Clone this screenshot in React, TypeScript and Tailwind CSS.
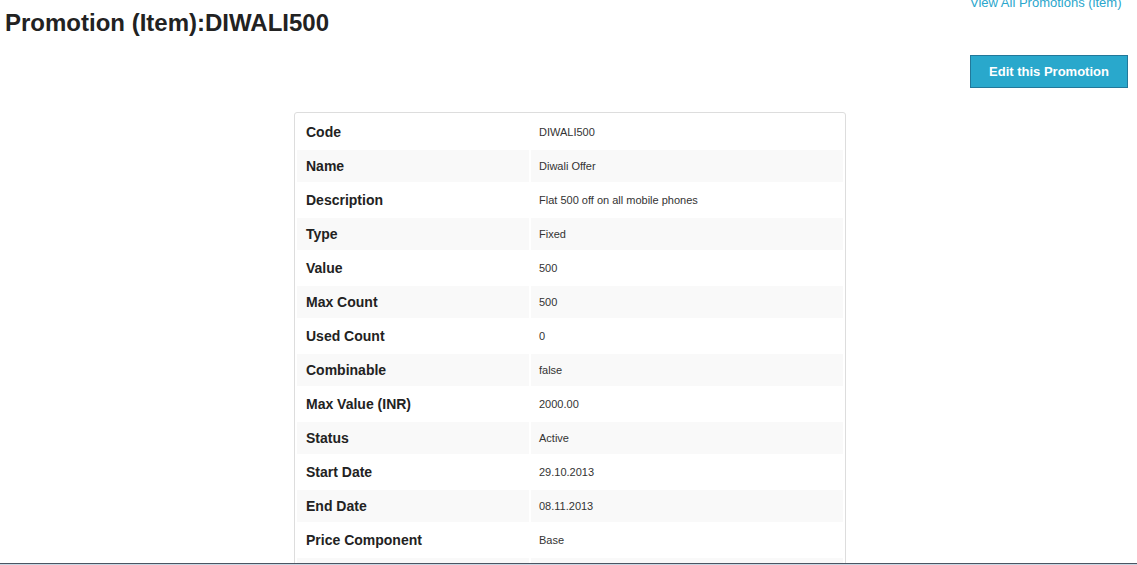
import React from "react";

const rows: [string, string][] = [
  ["Code", "DIWALI500"],
  ["Name", "Diwali Offer"],
  ["Description", "Flat 500 off on all mobile phones"],
  ["Type", "Fixed"],
  ["Value", "500"],
  ["Max Count", "500"],
  ["Used Count", "0"],
  ["Combinable", "false"],
  ["Max Value (INR)", "2000.00"],
  ["Status", "Active"],
  ["Start Date", "29.10.2013"],
  ["End Date", "08.11.2013"],
  ["Price Component", "Base"],
  ["Created", ""],
];

export default function App() {
  return (
    <div
      className="relative h-[565px] overflow-hidden bg-white text-[#222]"
      style={{ fontFamily: '"Liberation Sans", Arial, sans-serif' }}
    >
      <div className="flex justify-between">
        <h1 className="ml-[5px] mt-[7px] text-[24px] font-bold leading-[32px] text-[#222]">
          Promotion (Item):DIWALI500
        </h1>
        <div className="mr-[9px] flex flex-col items-start">
          <a href="#" className="-mt-[5px] text-[13px] leading-[16px] text-[#2aa6cc]">
            View All Promotions (item)
          </a>
          <button className="mt-[44px] h-[33px] w-[158px] border border-[#22789a] bg-[#29a8cc] text-[13px] font-bold text-white">
            Edit this Promotion
          </button>
        </div>
      </div>

      <div className="mt-[24px] flex justify-center pl-[3px]">
        <div className="w-[552px] rounded-[3px] border border-[#dddddd] pt-[1px]">
          <table className="w-full border-separate border-spacing-[2px]">
            <tbody>
              {rows.map(([label, value], i) => (
                <tr key={label} className={i % 2 === 1 ? "bg-[#f9f9f9]" : ""}>
                  <td className="h-[32px] w-[232px] pl-[9px] text-[14px] font-bold text-[#222]">
                    {label}
                  </td>
                  <td className="h-[32px] pl-[8px] text-[11px] text-[#333]">{value}</td>
                </tr>
              ))}
            </tbody>
          </table>
        </div>
      </div>

      <div className="absolute bottom-0 left-0 right-0 h-[2px] border-t border-[#4b5563] bg-[#c9d6e2]" />
    </div>
  );
}
